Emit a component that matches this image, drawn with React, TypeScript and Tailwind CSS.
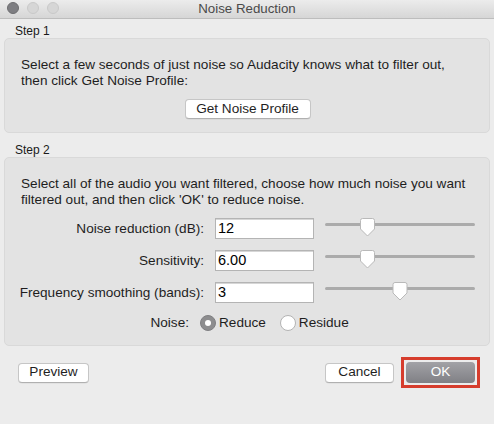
import React from "react";

// Slider thumb: white pentagon pointing down
function Slider({ pos }: { pos: number }) {
  return (
    <svg width="150" height="20" viewBox="0 0 150 20" className="block">
      <rect x="0" y="5" width="150" height="3" rx="1.5" fill="#ababab" />
      <g transform={`translate(${pos - 7.5},0)`}>
        <path
          d="M2.5 0.5 H12.5 Q14.5 0.5 14.5 2.5 V11 L7.5 18 L0.5 11 V2.5 Q0.5 0.5 2.5 0.5 Z"
          fill="#ffffff"
          stroke="#b9b9b9"
          strokeWidth="1"
        />
      </g>
    </svg>
  );
}

function Radio({ checked }: { checked?: boolean }) {
  if (checked) {
    return (
      <span className="flex h-[16px] w-[16px] items-center justify-center rounded-full bg-[#8d8d8f] border border-[#7f7f82]">
        <span className="h-[6px] w-[6px] rounded-full bg-white" />
      </span>
    );
  }
  return <span className="block h-[16px] w-[16px] rounded-full bg-white border border-[#b3b3b3]" />;
}

function Field({ label, value, pos }: { label: string; value: string; pos: number }) {
  return (
    <div className="flex items-start h-[21px]">
      <div className="w-[199px] text-right leading-[21px]">{label}</div>
      <div className="ml-[11px] w-[99px] h-[21px] bg-white border border-[#b4b4b4] shadow-[inset_0_1px_0_#d6d6d6] pl-[2px] text-[14.5px] leading-[19px] text-black">
        {value}
      </div>
      <div className="ml-[11px] mt-0">
        <Slider pos={pos} />
      </div>
    </div>
  );
}

function MacButton({ children, className = "" }: { children: React.ReactNode; className?: string }) {
  return (
    <div
      className={`flex h-[20px] items-center justify-center rounded-[4px] bg-white border border-[#c6c6c6] border-b-[#b0b0b0] shadow-[0_0.5px_0_rgba(0,0,0,0.08)] text-[13.6px] text-[#1f1f1f] ${className}`}
    >
      {children}
    </div>
  );
}

export default function App() {
  return (
    <div className="w-[494px] h-[424px] bg-[#ececec] flex flex-col font-['Liberation_Sans',Arial,sans-serif] text-[13.6px] text-[#1e1e1e] overflow-hidden">
      {/* title bar */}
      <div className="relative h-[19px] flex items-center justify-center bg-gradient-to-b from-[#ececec] to-[#d6d6d6] border-b border-[#bdbdbd]">
        <div className="absolute left-[7px] top-[2px] flex gap-[8px]">
          <span className="h-[12px] w-[12px] rounded-full bg-[#7e7e82] border border-[#6d6d70]" />
          <span className="h-[12px] w-[12px] rounded-full bg-[#d6d6d6] border border-[#c9c9c9]" />
          <span className="h-[12px] w-[12px] rounded-full bg-[#d6d6d6] border border-[#c9c9c9]" />
        </div>
        <span className="text-[13.3px] text-[#4a4a4a] leading-[18px]">Noise Reduction</span>
      </div>

      <div className="px-[4px] flex flex-col">
        <div className="h-[19px] pt-[5px] pl-[11px] text-[12px] leading-[14px] text-[#1a1a1a]">Step 1</div>
        <div className="h-[95px] rounded-[5px] bg-[#e3e3e3] border border-[#d9d9d9] pt-[18px] px-[16px] flex flex-col">
          <p className="leading-[16px]">
            Select a few seconds of just noise so Audacity knows what to filter out,
            <br />
            then click Get Noise Profile:
          </p>
          <div className="mt-[10px] flex justify-center pl-[1px]">
            <MacButton className="w-[126px]">Get Noise Profile</MacButton>
          </div>
        </div>

        <div className="h-[24px] pt-[10px] pl-[11px] text-[12px] leading-[14px] text-[#1a1a1a]">Step 2</div>
        <div className="h-[189px] rounded-[5px] bg-[#e3e3e3] border border-[#d9d9d9] pt-[18px] flex flex-col">
          <p className="leading-[16px] px-[16px]">
            Select all of the audio you want filtered, choose how much noise you want
            <br />
            filtered out, and then click 'OK' to reduce noise.
          </p>
          <div className="mt-[10px] flex flex-col gap-[11px]">
            <Field label="Noise reduction (dB):" value="12" pos={42.5} />
            <Field label="Sensitivity:" value="6.00" pos={42.5} />
            <Field label="Frequency smoothing (bands):" value="3" pos={75} />
          </div>
          <div className="mt-[12px] flex items-center h-[16px]">
            <div className="w-[184px] text-right">Noise:</div>
            <div className="ml-[11px]">
              <Radio checked />
            </div>
            <span className="ml-[3px]">Reduce</span>
            <div className="ml-[14px]">
              <Radio />
            </div>
            <span className="ml-[3px]">Residue</span>
          </div>
        </div>
      </div>

      {/* bottom buttons */}
      <div className="mt-[11px] flex items-center pl-[18px] pr-[14px]">
        <MacButton className="w-[71px]">Preview</MacButton>
        <div className="flex-1" />
        <MacButton className="w-[69px]">Cancel</MacButton>
        <div className="ml-[7px] border-[3px] border-[#d63d2d] p-[2px]">
          <div className="flex h-[21px] w-[69px] items-center justify-center rounded-[4px] bg-gradient-to-b from-[#a2a2a6] to-[#808085] text-[13.6px] text-white">
            OK
          </div>
        </div>
      </div>
    </div>
  );
}
